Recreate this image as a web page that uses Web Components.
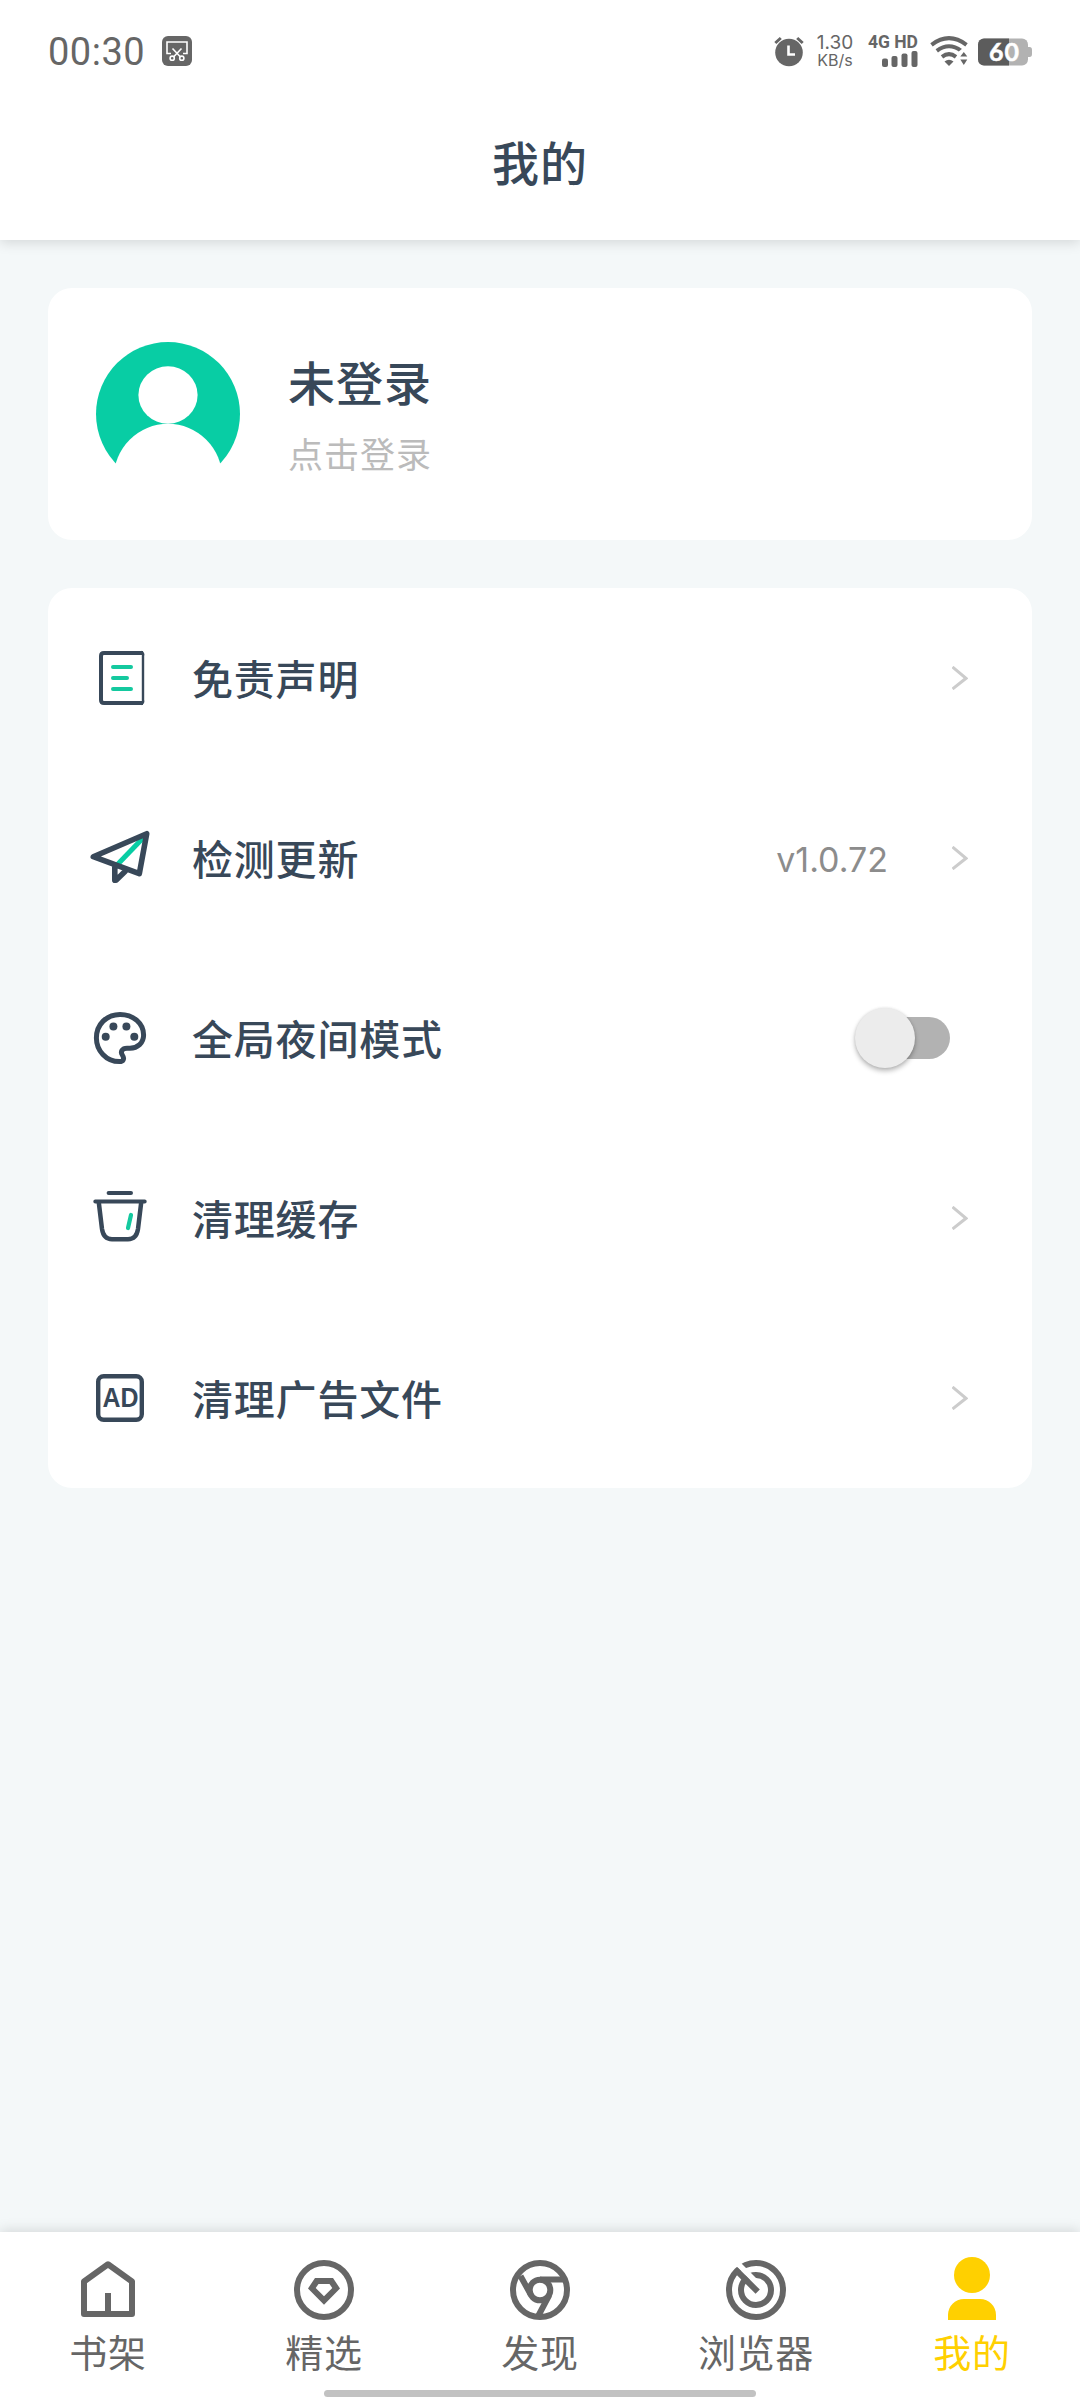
<!DOCTYPE html>
<html lang="zh-CN">
<head>
<meta charset="utf-8">
<title>我的</title>
<style>
html,body{margin:0;padding:0}
body{width:1080px;height:2400px;overflow:hidden;background:#f4f8f9;font-family:Roboto,"Noto Sans CJK SC",sans-serif;color:#384859}
</style>
</head>
<body>
<profile-page></profile-page>
<script>
const ICONS = {
  doc: `<g fill="none" stroke="#384859" stroke-width="4"><path d="M59 11H20Q17 11 17 14V58Q17 61 20 61H59" /><path d="M57 10Q60 11 59 14V58Q60 61 57 62" stroke-width="2.4"/></g><path d="M29 25H47M29 36H43M29 47H47" stroke="#14c99f" stroke-width="4" stroke-linecap="round"/>`,
  plane: `<path d="M33.5 42.5L59 16" stroke="#08cda4" stroke-width="5"/><path d="M9.3 34.7L62.7 11.7L55.3 51.7ZM30.8 44V58.3H32L41 49.5" fill="none" stroke="#384859" stroke-width="5.6" stroke-linejoin="round" stroke-linecap="round"/>`,
  palette: `<path d="M36 12.4C49.5 12.4 59.6 21.5 59.6 33C59.6 41 53.5 46.2 46 46.2H43C38 46.2 36.2 49.8 38.3 53C41 57 39 59.6 35.5 59.6C22 59.6 12.4 48.5 12.4 36C12.4 22.5 22.5 12.4 36 12.4Z" fill="none" stroke="#384859" stroke-width="5"/><g fill="#384859"><circle cx="21.7" cy="34.8" r="4"/><circle cx="29.4" cy="24.4" r="4"/><circle cx="42.4" cy="24.4" r="4"/><circle cx="50.3" cy="34.8" r="4"/></g>`,
  trash: `<g fill="none" stroke="#384859" stroke-linecap="round"><path d="M24.6 11H47M11.3 19.5H60.7" stroke-width="4"/><path d="M14.8 20.5L18 47Q19.5 57.2 28 57.2H44Q52.5 57.2 54 47L57.2 20.5" stroke-width="4.5"/></g><path d="M47 33L44 46" stroke="#14c99f" stroke-width="4.2" stroke-linecap="round"/>`,
  ad: `<rect x="14.2" y="14.2" width="43.6" height="43.6" rx="5.5" fill="none" stroke="#384859" stroke-width="4.4"/><text x="18.5" y="45.2" font-family="Liberation Sans,sans-serif" font-weight="700" font-size="27" textLength="36" lengthAdjust="spacingAndGlyphs" fill="#384859">AD</text>`,
  home: `<path d="M12 27.5L36 10.3L60 27.5V60H12ZM36 39V60" fill="none" stroke="currentColor" stroke-width="6" stroke-linejoin="round"/>`,
  gem: `<circle cx="36" cy="36" r="27" fill="none" stroke="currentColor" stroke-width="6"/><path fill="currentColor" fill-rule="evenodd" d="M27 24H45L52 34.5 36 50.7 20 34.5ZM30.5 30L27.7 34 36 42.2 44.3 34 41.5 30Z"/>`,
  chrome: `<g fill="none" stroke="currentColor" stroke-width="6"><circle cx="36" cy="36" r="27"/><circle cx="36" cy="36" r="10.3"/><path d="M36 25.4H61M16.5 22L27 41M45.3 41L34.5 61.5"/></g>`,
  radar: `<g fill="none" stroke="currentColor" stroke-width="6"><circle cx="36" cy="36" r="27"/><circle cx="36" cy="36" r="15"/></g><path d="M15.5 7.5L37.5 29.5" stroke="#fff" stroke-width="5.6"/><path d="M15.4 15.4L37.7 37.7" stroke="currentColor" stroke-width="6"/>`,
  user: `<circle cx="36" cy="21" r="18" fill="currentColor"/><path fill="currentColor" d="M12 66V61C12 52 19 45 28 45H44C53 45 60 52 60 61V66Z"/>`
};

function define(name, render) {
  customElements.define(name, class extends HTMLElement {
    connectedCallback() {
      if (this.shadowRoot) return;
      this.attachShadow({ mode: 'open' }).innerHTML = render(this);
    }
  });
}

define('line-icon', el => `<style>:host{display:block;width:72px;height:72px;flex:none}svg{display:block}</style>
<svg width="72" height="72" viewBox="0 0 72 72">${ICONS[el.getAttribute('name')]}</svg>`);

define('status-bar', () => `<style>
:host{display:flex;height:102px;align-items:center;justify-content:space-between;padding:0 48px;color:#666;box-sizing:border-box}
.l,.r{display:flex;align-items:center}
.time{font:400 38px/44px Roboto,sans-serif;letter-spacing:.5px;width:114px;white-space:nowrap;padding-top:1px}
svg{display:block;flex:none;overflow:visible}
.net{width:38px;margin-left:12px;font-family:Inter,sans-serif;text-align:center;white-space:nowrap;display:flex;flex-direction:column;align-items:center}
.net span{display:block}
.a{font-size:19px;line-height:18px}.b{font-size:16px;line-height:17px}
.sig{width:50px;margin-left:14px;height:34px;display:flex;flex-direction:column;align-items:flex-end}
.sig span{font:700 17.5px/16px Roboto,sans-serif;white-space:nowrap}
</style>
<div class="l"><div class="time">00:30</div>
<svg width="30" height="30" viewBox="0 0 30 30"><rect width="30" height="30" rx="6" fill="#666"/><g fill="none" stroke="#fff" stroke-width="1.6"><path d="M9 17.5H5V6H25V17.5H21M10.5 12.5L18.5 21M19.5 12.5L11.5 21"/><circle cx="10.2" cy="22.2" r="2.1"/><circle cx="19.8" cy="22.2" r="2.1"/></g></svg></div>
<div class="r">
<svg width="30" height="30" viewBox="0 0 30 30"><circle cx="15" cy="16.5" r="13.8" fill="#666"/><path d="M1.3 7L6.8 2M28.7 7L23.2 2" stroke="#666" stroke-width="3"/><path d="M14.5 9.5V18.5H21" fill="none" stroke="#fff" stroke-width="2.6"/></svg>
<div class="net"><span class="a">1.30</span><span class="b">KB/s</span></div>
<div class="sig"><span>4G HD</span><svg width="36" height="18" viewBox="0 0 36 18" fill="#666"><rect x="0" y="8.5" width="6" height="8.5" rx="2"/><rect x="9.5" y="6" width="6" height="11" rx="2"/><rect x="19.5" y="3.5" width="6" height="13.5" rx="2"/><rect x="29.5" y="1" width="6" height="16" rx="2"/></svg></div>
<svg style="margin-left:12px" width="38" height="30" viewBox="0 0 38 30"><g fill="none" stroke="#666" stroke-width="4"><path d="M1.5 8.8Q19 -4.5 36.5 8.8"/><path d="M6.8 14.8Q19 5.8 31.2 14.8"/><path d="M12 20.8Q19 15.5 26 20.8"/></g><path d="M14.5 25.5Q19 22.2 23.5 25.5L19 30Z" fill="#666"/><path d="M27 17L33 12 39 17V30H29Z" fill="#fff"/><path d="M30.3 20.5L33.8 16 37.3 20.5ZM30.3 23.5L33.8 29 37.3 23.5Z" fill="#666"/></svg>
<svg style="margin:2px 0 0 10px" width="54" height="28" viewBox="0 0 54 28"><defs><clipPath id="c"><rect width="31" height="28"/></clipPath></defs><rect y=".5" width="50" height="27" rx="6" fill="#b2b2b2"/><path d="M50 9H51.5Q54 9 54 12V16Q54 19 51.5 19H50Z" fill="#b2b2b2"/><rect y=".5" width="50" height="27" rx="6" fill="#5c5c5c" clip-path="url(#c)"/><text x="11" y="22.8" font-family="Lato,Roboto,sans-serif" font-weight="700" font-size="25" textLength="30" fill="#fff" stroke="#fff" stroke-width=".5">60</text></svg>
</div>`);

define('page-header', () => `<style>
:host{display:block;height:240px;background:#fff;box-shadow:0 3px 12px rgba(0,0,0,.13);position:relative}
.t{height:126px;display:flex;align-items:center;justify-content:center;font-size:47px;letter-spacing:1px;font-weight:500;line-height:60px}
</style><status-bar></status-bar><div class="t"><slot></slot></div>`);

define('user-card', () => `<style>
:host{display:flex;height:252px;background:#fff;border-radius:24px;align-items:center;padding-left:48px;box-sizing:border-box}
svg{display:block;flex:none}
.x{margin-left:48px;display:flex;flex-direction:column;gap:18px;padding-top:8px}
.n{font-size:47px;letter-spacing:1px;font-weight:500;line-height:60px}.s{font-size:35px;letter-spacing:1px;line-height:48px;color:#bbb}
</style>
<svg width="144" height="144" viewBox="0 0 144 144"><path d="M0 72A72 72 0 0 1 144 72A72 72 0 0 1 120.5 125H23.5A72 72 0 0 1 0 72Z" fill="#08cda4"/><ellipse cx="72" cy="53" rx="29.6" ry="28.8" fill="#fff"/><circle cx="72" cy="136" r="54.2" fill="#fff"/></svg>
<div class="x"><div class="n"><slot name="name"></slot></div><div class="s"><slot name="hint"></slot></div></div>`);

define('toggle-switch', () => `<style>
:host{display:flex;width:96px;height:62px;align-items:center;justify-content:flex-end}
.k{width:88px;height:42px;border-radius:21px;background:#b2b2b2;display:flex;align-items:center;box-sizing:border-box}
.h{width:60px;height:60px;flex:none;margin-left:-7px;border-radius:50%;background:#ececec;box-shadow:0 3px 5px rgba(0,0,0,.27),0 0 3px rgba(0,0,0,.1)}
</style><div class="k"><div class="h"></div></div>`);

define('menu-row', el => `<style>
:host{display:flex;height:180px;align-items:center;padding:0 64px 0 36px;box-sizing:border-box}
.t{margin-left:36px;font-size:41px;letter-spacing:.8px;font-weight:500;line-height:54px;flex:1;padding-top:5px}
.v{font:400 34px/44px Inter,sans-serif;color:#8c8c8c;padding-top:4px;margin-right:64px}
svg{display:block}
.sw{margin:-1px 18px 0 0}
</style><line-icon name="${el.getAttribute('icon')}"></line-icon><div class="t"><slot></slot></div>
${el.hasAttribute('value') ? `<div class="v">${el.getAttribute('value')}</div>` : ''}
${el.hasAttribute('toggle') ? '<toggle-switch class="sw"></toggle-switch>' : '<svg width="16" height="24" viewBox="0 0 16 24"><path d="M.5 1L14 12.3L.5 23" fill="none" stroke="#ccc" stroke-width="3"/></svg>'}`);

define('menu-card', () => `<style>:host{display:flex;flex-direction:column;background:#fff;border-radius:24px}</style><slot></slot>`);

define('tab-item', el => `<style>
:host{display:flex;flex:1;flex-direction:column;align-items:center;color:${el.hasAttribute('active') ? '#ffd000' : '#666'};padding-top:22px}
.t{font-size:38px;letter-spacing:.7px;line-height:50px;padding-top:3px}
</style><line-icon name="${el.getAttribute('icon')}"></line-icon><div class="t"><slot></slot></div>`);

define('tab-bar', () => `<style>
:host{display:flex;height:168px;background:#fff;box-shadow:0 -2px 12px rgba(0,0,0,.13);position:relative}
.bar{position:absolute;left:324px;top:158px;width:432px;height:7px;border-radius:3.5px;background:#c2c2c2}
</style><slot></slot><div class="bar"></div>`);

define('profile-page', () => `<style>
:host{display:flex;flex-direction:column;width:1080px;height:2400px;background:#f4f8f9}
main{flex:1;padding:48px;display:flex;flex-direction:column;gap:48px}
</style>
<page-header>我的</page-header>
<main>
<user-card><span slot="name">未登录</span><span slot="hint">点击登录</span></user-card>
<menu-card>
<menu-row icon="doc">免责声明</menu-row>
<menu-row icon="plane" value="v1.0.72">检测更新</menu-row>
<menu-row icon="palette" toggle>全局夜间模式</menu-row>
<menu-row icon="trash">清理缓存</menu-row>
<menu-row icon="ad">清理广告文件</menu-row>
</menu-card>
</main>
<tab-bar>
<tab-item icon="home">书架</tab-item><tab-item icon="gem">精选</tab-item><tab-item icon="chrome">发现</tab-item><tab-item icon="radar">浏览器</tab-item><tab-item icon="user" active>我的</tab-item>
</tab-bar>`);
</script>
</body>
</html>
